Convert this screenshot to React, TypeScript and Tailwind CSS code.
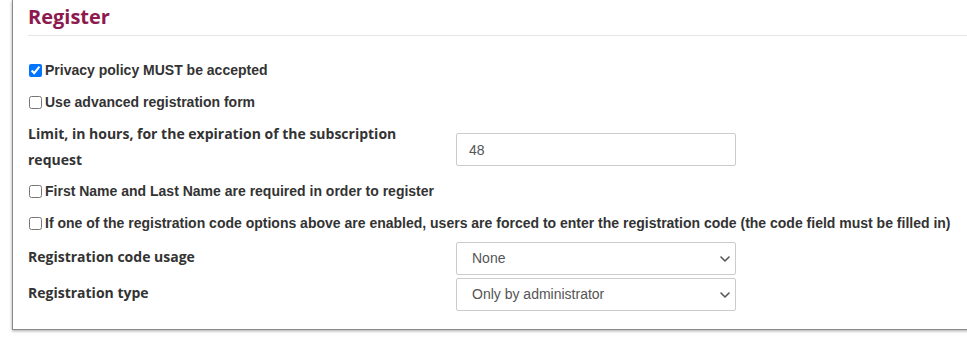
import React from 'react';

const sans = { fontFamily: '"Open Sans", sans-serif' };
const arial = { fontFamily: '"Liberation Sans", Arial, sans-serif' };

const Check = ({ label, checked }: { label: string; checked?: boolean }) => (
    <label className="flex items-center h-[32px] text-[14px] font-bold text-[#333]" style={arial}>
        <input type="checkbox" defaultChecked={checked} className="w-[13px] h-[13px] ml-[1px] mr-[3px] accent-[#0075ff]" />
        {label}
    </label>
);

const Chevron = () => (
    <svg width="10" height="6" viewBox="0 0 10 6" className="absolute right-[6px] top-[14px] pointer-events-none">
        <path d="M1 1l4 4 4-4" fill="none" stroke="#555" strokeWidth="1.6" strokeLinecap="round" strokeLinejoin="round" />
    </svg>
);

const SelectRow = ({ label, value }: { label: string; value: string }) => (
    <div className="grid grid-cols-[428px_280px] items-start h-[36px]">
        <span className="text-[14px] font-bold text-[#333] leading-[30px]" style={sans}>{label}</span>
        <div className="relative">
            <select defaultValue={value} className="appearance-none w-[280px] h-[33px] border border-[#ccc] rounded-[2px] bg-white pl-[15px] text-[14px] text-[#555] outline-none" style={arial}>
                <option>{value}</option>
            </select>
            <Chevron />
        </div>
    </div>
);

export default function App() {
    return (
        <div className="w-[967px] h-[347px] bg-white overflow-hidden">
            <div className="ml-[12px] w-[1000px] border-l border-b border-[#8a8a8a] shadow-[0_1px_3px_rgba(0,0,0,0.35)] bg-white pl-[15px] pb-[15px]">
                <h2 className="text-[20px] font-bold text-[#8c1a4e] pt-[1px] leading-[32px]" style={sans}>Register</h2>
                <div className="border-t border-[#e5e5e5] mt-[2px] mb-[18px]" />
                <Check label="Privacy policy MUST be accepted" checked />
                <Check label="Use advanced registration form" />
                <div className="grid grid-cols-[428px_280px] items-start mt-[3px]">
                    <span className="text-[14px] font-bold text-[#333] leading-[26px] pr-[30px]" style={sans}>
                        Limit, in hours, for the expiration of the subscription request
                    </span>
                    <input defaultValue="48" className="mt-[12px] w-[280px] h-[33px] border border-[#ccc] rounded-[2px] px-[12px] text-[14px] text-[#555] outline-none" style={arial} />
                </div>
                <div className="mt-[2px]">
                    <Check label="First Name and Last Name are required in order to register" />
                    <Check label="If one of the registration code options above are enabled, users are forced to enter the registration code (the code field must be filled in)" />
                </div>
                <div className="mt-[3px]">
                    <SelectRow label="Registration code usage" value="None" />
                    <SelectRow label="Registration type" value="Only by administrator" />
                </div>
            </div>
        </div>
    );
}
